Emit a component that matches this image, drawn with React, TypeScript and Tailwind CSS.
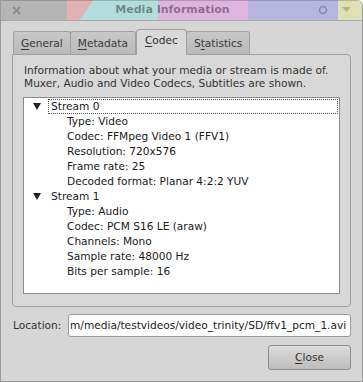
import React from "react";

const font = { fontFamily: '"DejaVu Sans", "Liberation Sans", sans-serif' };

function U({ children }: { children: React.ReactNode }) {
  return <span className="underline underline-offset-2 decoration-1">{children}</span>;
}

function TitleBar() {
  return (
    <div className="relative h-[21px] border-b border-[#a8a8a8] overflow-hidden rounded-tr-[6px]">
      <svg className="absolute inset-0" width="363" height="21" viewBox="0 0 363 21">
        <rect x="0" y="0" width="363" height="21" fill="#b5b5b5" />
        <polygon points="66,0 92,0 78,21 66,21" fill="#e2b2b2" />
        <polygon points="92,0 157,0 157,21 78,21" fill="#b2ddda" />
        <rect x="157" y="0" width="90" height="21" fill="#dfb4de" />
        <rect x="247" y="0" width="90" height="21" fill="#b5b5de" />
        <rect x="337" y="0" width="26" height="21" fill="#e0e0b6" />
        <rect x="0" y="0" width="363" height="1" fill="#000" opacity="0.18" />
      </svg>
      <div className="relative flex h-full items-center px-[10px]">
        <svg width="9" height="9" viewBox="0 0 9 9" className="ml-[1px]">
          <path d="M1 1 L8 8 M8 1 L1 8" stroke="#8e8e8e" strokeWidth="2" />
        </svg>
        <div className="flex-1 text-center text-[11px] font-bold text-black/40 pl-[6px]" style={font}>
          Media Information
        </div>
        <svg width="10" height="10" viewBox="0 0 10 10" className="mr-[14px]">
          <circle cx="5" cy="5" r="3.5" fill="none" stroke="#8888aa" strokeWidth="1.6" />
        </svg>
        <svg width="9" height="6" viewBox="0 0 9 6" className="mr-[1px]">
          <polygon points="0,0 9,0 4.5,5" fill="#b3b38e" />
        </svg>
      </div>
    </div>
  );
}

function Tab({ children, active }: { children: React.ReactNode; active?: boolean }) {
  if (active) {
    return (
      <div className="relative z-10 -mb-px h-[26px] px-[8px] pt-[3px] border border-b-0 border-[#a0a0a0] rounded-t-[4px] bg-[#d9d9d9] text-[#333]">
        {children}
      </div>
    );
  }
  return (
    <div className="h-[23px] mt-[3px] px-[7px] pt-[4px] border border-b-0 border-[#a0a0a0] rounded-t-[3px] bg-gradient-to-b from-[#c8c8c8] to-[#b9b9b9] text-[#3a3a3a] -ml-px first:ml-0">
      {children}
    </div>
  );
}

const stream0 = [
  "Type: Video",
  "Codec: FFMpeg Video 1 (FFV1)",
  "Resolution: 720x576",
  "Frame rate: 25",
  "Decoded format: Planar 4:2:2 YUV",
];
const stream1 = [
  "Type: Audio",
  "Codec: PCM S16 LE (araw)",
  "Channels: Mono",
  "Sample rate: 48000 Hz",
  "Bits per sample: 16",
];

function Tri() {
  return (
    <svg width="8" height="7" viewBox="0 0 8 7" className="mr-[7px]">
      <polygon points="0,0 8,0 4,7" fill="#222" />
    </svg>
  );
}

export default function App() {
  return (
    <div
      className="w-[363px] h-[382px] bg-[#d6d6d6] border-x border-b border-[#9a9a9a] rounded-tr-[6px] flex flex-col text-[10.6px] text-[#1c1c1c]"
      style={font}
    >
      <TitleBar />
      <div className="flex flex-col px-[11px] pt-[7px]">
        <div className="flex items-end pl-[1px]">
          <Tab><U>G</U>eneral</Tab>
          <Tab><U>M</U>etadata</Tab>
          <Tab active><U>C</U>odec</Tab>
          <Tab>S<U>t</U>atistics</Tab>
        </div>
        <div className="h-[253px] border border-[#a0a0a0] rounded-b-[4px] rounded-tr-[4px] bg-[#d8d8d8] px-[10px] pt-[9px] pb-[12px] flex flex-col">
          <div className="text-[#333] leading-[13px] pl-[1px]">
            <div>Information about what your media or stream is made of.</div>
            <div>Muxer, Audio and Video Codecs, Subtitles are shown.</div>
          </div>
          <div className="mt-[7px] flex-1 bg-white border border-[#8c8c8c] pt-[1px] text-[#1a1a1a]">
            <div className="flex items-center h-[15px] pl-[9px]">
              <Tri />
              <div className="flex-1 h-[15px] border border-dotted border-[#555] pl-[2px] flex items-center mr-[1px]">Stream 0</div>
            </div>
            {stream0.map((s) => (
              <div key={s} className="h-[15px] flex items-center pl-[43px]">{s}</div>
            ))}
            <div className="flex items-center h-[15px] pl-[9px]">
              <Tri />
              <div className="pl-[3px]">Stream 1</div>
            </div>
            {stream1.map((s) => (
              <div key={s} className="h-[15px] flex items-center pl-[43px]">{s}</div>
            ))}
          </div>
        </div>
        <div className="flex items-center mt-[7px]">
          <div className="w-[56px] pl-[1px] text-[#333]">Location:</div>
          <div className="flex-1 h-[23px] bg-white border border-[#9a9a9a] rounded-[3px] overflow-hidden flex items-center pl-[1px] whitespace-nowrap">
            m/media/testvideos/video_trinity/SD/ffv1_pcm_1.avi
          </div>
        </div>
        <div className="flex justify-end mt-[8px]">
          <div className="w-[83px] h-[25px] border border-[#8e8e8e] rounded-[3px] bg-gradient-to-b from-[#dcdcdc] to-[#bdbdbd] flex items-center justify-center text-[#333]">
            <U>C</U>lose
          </div>
        </div>
      </div>
    </div>
  );
}
